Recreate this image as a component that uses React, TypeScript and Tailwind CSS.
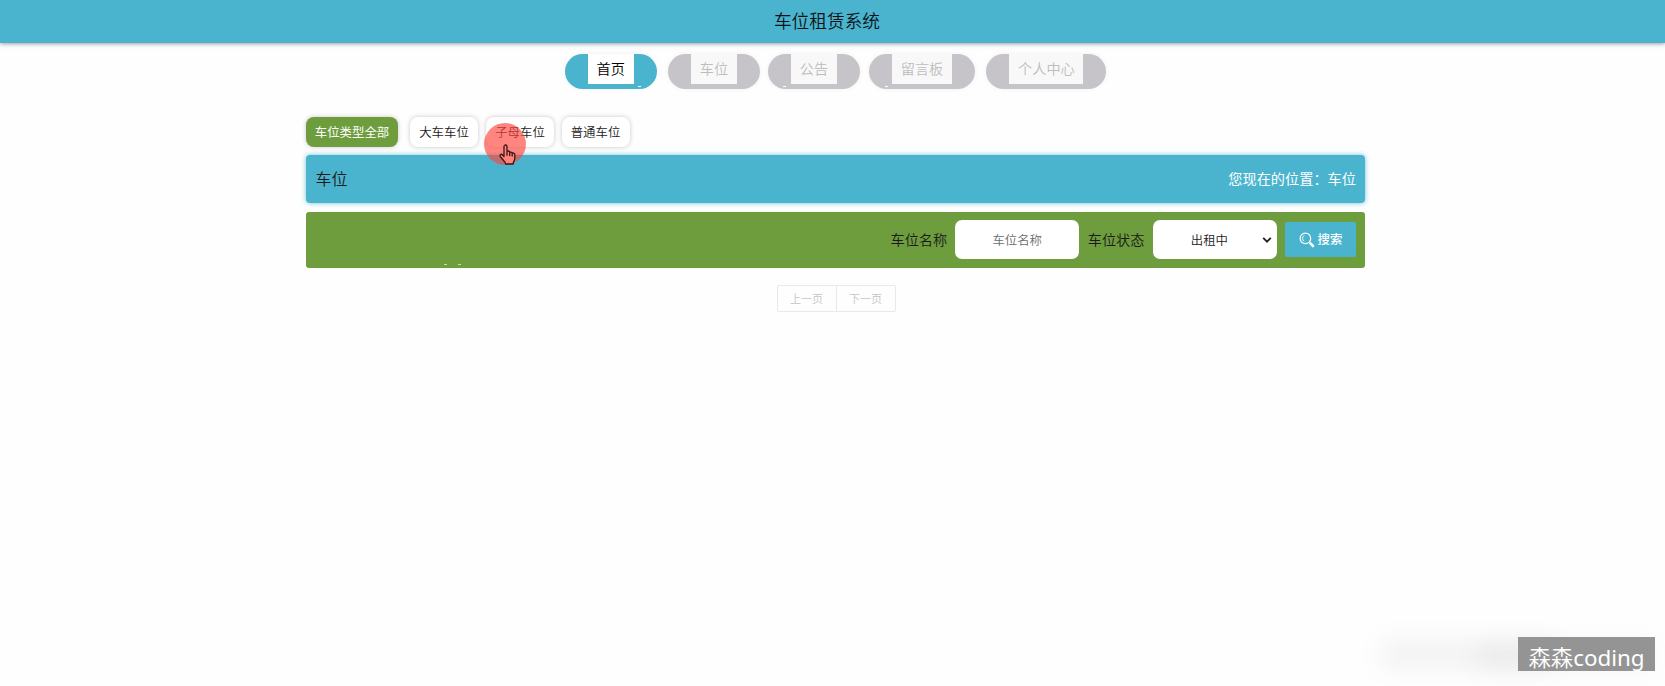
import type { ReactNode } from "react";

const navItems = [
  { label: "首页", pill: "w-[91.5px] ml-0", active: true, fleck: "left-[73px]" },
  { label: "车位", pill: "w-[92px] ml-[11.5px]", active: false, fleck: "" },
  { label: "公告", pill: "w-[92px] ml-[8px]", active: false, fleck: "left-[15px]" },
  { label: "留言板", pill: "w-[106px] ml-[9px]", active: false, fleck: "left-[16px]" },
  { label: "个人中心", pill: "w-[120px] ml-[11.4px]", active: false, fleck: "" },
];

function NavPill({ label, pill, active, fleck }: (typeof navItems)[number]) {
  return (
    <li
      className={`relative h-[35px] shrink-0 rounded-full px-[23px] shadow-[0_0_5px_rgba(0,0,0,0.06)] ${pill} ${
        active ? "bg-[#4ab4ce]" : "bg-[#c6c4c9]"
      }`}
    >
      <a
        className={`flex h-[30px] items-center justify-center whitespace-nowrap text-[14.2px] ${
          active ? "bg-white text-black" : "bg-[#f8f8f9] text-[#bdbdc0]"
        }`}
      >
        {label}
      </a>
      {fleck && <span className={`absolute bottom-[2px] h-[1.5px] w-[3px] bg-white ${fleck}`} />}
    </li>
  );
}

function TypeTab({ children, className }: { children: ReactNode; className: string }) {
  return (
    <button
      className={`flex h-[30px] items-center justify-center whitespace-nowrap rounded-[8px] pt-[2px] text-[12.4px] shadow-[0_0_4px_rgba(80,60,80,0.3)] ${className}`}
    >
      {children}
    </button>
  );
}

function HandCursor() {
  return (
    <svg
      viewBox="0 0 17 21"
      className="absolute left-[15px] top-[20.5px] h-[21px] w-[17px]"
      fill="#ff827b"
      stroke="#3b1516"
      strokeWidth="1.3"
      strokeLinejoin="round"
      strokeLinecap="round"
    >
      <path d="M5 12V2.5C5 .5 8 .5 8 2.5V8c0-1.4 2.7-1.3 2.7.2V9c0-1.3 2.5-1.2 2.5.2v.6c0-1.3 2.6-1 2.6.8V14c0 2.6-1.6 3.6-1.6 6H6.7c0-2-3.2-4.2-5.4-7.6-.9-1.6.9-2.8 2-1.6L5 12.5M8 8v3.3M10.7 9v2.5M13.2 10v2" />
    </svg>
  );
}

function SearchIcon() {
  return (
    <svg viewBox="0 0 16 16" className="h-[16px] w-[16px]" fill="none" stroke="white" strokeLinecap="round">
      <circle cx="6.4" cy="6.4" r="5.3" strokeWidth="1.2" />
      <path d="M4.6 9A3.4 3.4 0 0 1 4.8 3.6" strokeWidth="0.9" />
      <path d="M11.4 11.4l2.6 2.6" strokeWidth="2.6" />
    </svg>
  );
}

export default function App() {
  return (
    <div className="relative h-[686px] w-[1665px] overflow-hidden bg-[#fefefe] font-['Noto_Sans','Noto_Sans_CJK_SC',sans-serif] font-[350] text-[#1a1a1a]">
      <header className="flex h-[43px] items-center justify-center bg-[#4ab4ce] pb-[1px] pr-[11px] text-[17.7px] text-[#0c1216] shadow-[0_1px_4px_rgba(70,50,90,0.5)]">
        车位租赁系统
      </header>

      <nav className="pl-[565px] pt-[11px]">
        <ul className="flex">
          {navItems.map((item) => (
            <NavPill key={item.label} {...item} />
          ))}
        </ul>
      </nav>

      <main className="ml-[306px] w-[1059px] pt-[28px]">
        <div className="flex">
          <TypeTab className="w-[92px] bg-[#6d9d3d] font-normal text-white">车位类型全部</TypeTab>
          <TypeTab className="ml-[12px] w-[68px] bg-white">大车车位</TypeTab>
          <div className="relative ml-[8px]">
            <TypeTab className="w-[68px] bg-white">子母车位</TypeTab>
            <div className="absolute -left-[2px] top-[6px] h-[42px] w-[42px] rounded-full bg-[#ff453c]/65">
              <HandCursor />
            </div>
          </div>
          <TypeTab className="ml-[7.5px] w-[68px] bg-white">普通车位</TypeTab>
        </div>

        <section className="mt-[8px] flex h-[48px] items-center justify-between rounded-[4px] bg-[#4ab4ce] pl-[9.5px] pr-[9px] shadow-[0_0_5px_rgba(74,180,206,0.8)]">
          <h1 className="text-[16px]">车位</h1>
          <p className="text-[14.2px] font-normal text-white">您现在的位置：车位</p>
        </section>

        <form className="relative mt-[9px] flex h-[56px] items-center justify-end rounded-[3px] bg-[#6d9d3d] pb-px pr-[9px] text-[14.2px]">
          <label className="mr-[8px]">车位名称</label>
          <input
            placeholder="车位名称"
            className="h-[39px] w-[124px] rounded-[7px] bg-white pt-[2px] text-center text-[12.4px] placeholder:text-[#6c6c6c]"
          />
          <label className="ml-[8.5px] mr-[8.5px]">车位状态</label>
          <div className="flex h-[39px] w-[124px] items-center justify-end rounded-[7px] bg-white pr-[5px] pt-px text-[12.4px]">
            <span className="pt-[2px]">出租中</span>
            <svg viewBox="0 0 10 8" className="ml-[34px] h-[8px] w-[10px]" fill="none" stroke="#222" strokeWidth="1.9">
              <path d="M1.2 1.8L5 5.6l3.8-3.8" />
            </svg>
          </div>
          <button
            type="button"
            className="ml-[8px] flex h-[35px] w-[71px] items-center justify-center gap-[3px] rounded-[2px] bg-[#4ab4ce] text-[12.4px] font-medium text-white"
          >
            <SearchIcon />
            <span className="pt-[2px]">搜索</span>
          </button>
          <span className="absolute bottom-[3px] left-[138px] h-px w-[3px] bg-[#c8dab3]" />
          <span className="absolute bottom-[3px] left-[152px] h-px w-[3px] bg-[#c8dab3]" />
        </form>

        <div className="ml-[470.5px] mt-[17px] flex h-[27px] w-[119px] rounded-[2px] border border-[#e9e9eb] pt-px text-[11px] text-[#c4c4c9]">
          <span className="-mt-px flex flex-1 items-center justify-center border-r border-[#e9e9eb] pt-px">上一页</span>
          <span className="flex flex-1 items-center justify-center">下一页</span>
        </div>
      </main>

      <div className="absolute left-[1378px] top-[638px] h-[34px] w-[180px] rounded-full bg-black/4 blur-[11px]" />
      <div className="absolute left-[1474px] top-[640px] h-[32px] w-[180px] rounded-full bg-black/3 blur-[11px]" />
      <div className="absolute left-[1518px] top-[637px] flex h-[34px] w-[137px] items-center justify-center whitespace-nowrap bg-[#949494] pt-[8px] text-[22.4px] leading-none text-white">
        森森<span className="font-normal">coding</span>
      </div>
    </div>
  );
}
